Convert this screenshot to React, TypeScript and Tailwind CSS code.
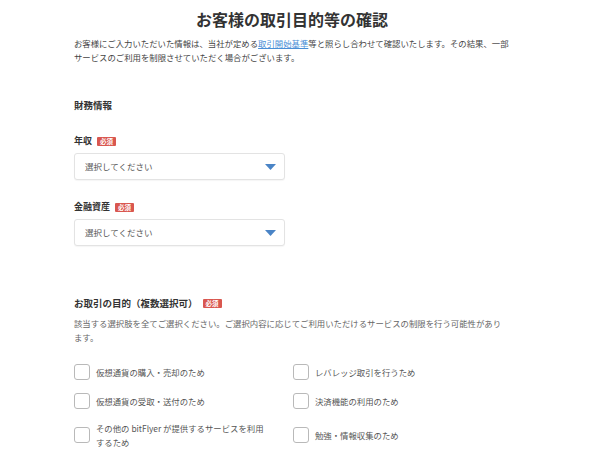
import React from "react";

const Required = () => (
  <span className="ml-[5px] inline-flex h-[9px] items-center rounded-[1px] bg-[#d9574f] px-[3px] text-[6.5px] leading-none text-white">
    必須
  </span>
);

const SelectBox = () => (
  <div className="flex h-[27px] w-[211px] items-center justify-between rounded-[3px] border border-[#e3e3e3] bg-white pl-[10px] pr-[8px] shadow-[0_1px_1px_rgba(0,0,0,0.04)]">
    <span className="text-[8.5px] text-[#555]">選択してください</span>
    <svg width="11" height="6" viewBox="0 0 11 6">
      <path d="M0 0 H11 L5.5 6 Z" fill="#4a84c6" />
    </svg>
  </div>
);

const Check = ({ label }: { label: string }) => (
  <label className="flex items-center gap-[6px]">
    <span className="h-[16px] w-[16px] shrink-0 rounded-[3px] border border-[#b9b9b9] bg-white" />
    <span className="w-[172px] text-[8.4px] leading-[14px] text-[#555]">{label}</span>
  </label>
);

export default function App() {
  return (
    <div
      className="min-h-screen bg-white text-[#333]"
      style={{ fontFamily: '"Noto Sans CJK JP", "Noto Sans", sans-serif' }}
    >
      <div className="ml-[74px] w-[436px] pt-[9px]">
        <h1 className="text-center text-[16px] font-bold leading-[20px] text-[#333]">
          お客様の取引目的等の確認
        </h1>
        <p className="mt-[7px] text-[8.4px] leading-[14px] text-[#444]">
          お客様にご入力いただいた情報は、当社が定める
          <a className="text-[#4a8fd6] underline">取引開始基準</a>
          等と照らし合わせて確認いたします。その結果、一部サービスのご利用を制限させていただく場合がございます。
        </p>

        <h2 className="mt-[34px] text-[9.5px] font-bold leading-[14px]">財務情報</h2>

        <div className="mt-[22px] flex items-center text-[9px] font-bold leading-[14px]">
          年収
          <Required />
        </div>
        <div className="mt-[5px]">
          <SelectBox />
        </div>

        <div className="mt-[20px] flex items-center text-[9px] font-bold leading-[14px]">
          金融資産
          <Required />
        </div>
        <div className="mt-[5px]">
          <SelectBox />
        </div>

        <div className="mt-[50px] flex items-center text-[9.5px] font-bold leading-[14px]">
          お取引の目的（複数選択可）
          <Required />
        </div>
        <p className="mt-[6px] w-[428px] text-[8.4px] leading-[14px] text-[#666]">
          該当する選択肢を全てご選択ください。ご選択内容に応じてご利用いただけるサービスの制限を行う可能性があります。
        </p>

        <div className="mt-[20px] grid grid-cols-[219px_1fr] items-center gap-y-[12.5px]">
          <Check label="仮想通貨の購入・売却のため" />
          <Check label="レバレッジ取引を行うため" />
          <Check label="仮想通貨の受取・送付のため" />
          <Check label="決済機能の利用のため" />
          <Check label="その他の bitFlyer が提供するサービスを利用するため" />
          <Check label="勉強・情報収集のため" />
        </div>
      </div>
    </div>
  );
}
